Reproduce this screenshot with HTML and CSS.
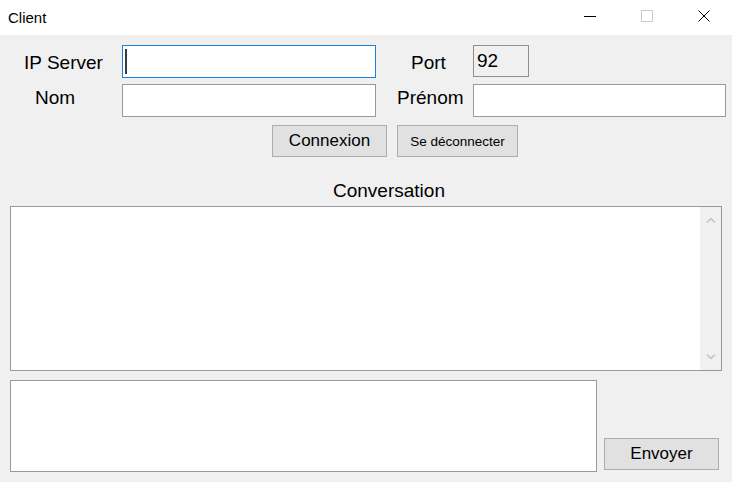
FILE: index.html
```html
<!DOCTYPE html>
<html lang="fr">
<head>
<meta charset="utf-8">
<title>Client</title>
<link rel="stylesheet" href="styles.css">
</head>
<body>
<div class="window">
  <div class="titlebar">
    <div class="title">Client</div>
    <div class="controls">
      <div class="ctl">
        <svg width="12" height="12" viewBox="0 0 12 12"><line x1="0" y1="6.5" x2="12" y2="6.5" stroke="#000" stroke-width="1"/></svg>
      </div>
      <div class="ctl">
        <svg width="12" height="12" viewBox="0 0 12 12"><rect x="0.5" y="0.5" width="11" height="11" fill="none" stroke="#cccccc" stroke-width="1"/></svg>
      </div>
      <div class="ctl">
        <svg width="12" height="12" viewBox="0 0 12 12"><path d="M0.5 0.5 L11.5 11.5 M11.5 0.5 L0.5 11.5" stroke="#000" stroke-width="1" fill="none"/></svg>
      </div>
    </div>
  </div>
  <div class="content">
    <div class="row row1">
      <div class="lbl lbl-ip">IP Server</div>
      <div class="field focused"><span class="caret"></span></div>
      <div class="lbl lbl-port">Port</div>
      <div class="field port">92</div>
    </div>
    <div class="row row2">
      <div class="lbl lbl-nom">Nom</div>
      <div class="field"></div>
      <div class="lbl lbl-prenom">Prénom</div>
      <div class="field wide"></div>
    </div>
    <div class="actions">
      <button class="btn btn-connect">Connexion</button>
      <button class="btn btn-disc">Se déconnecter</button>
    </div>
    <div class="conv-title">Conversation</div>
    <div class="conv">
      <div class="conv-body"></div>
      <div class="scrollbar">
        <svg width="10" height="6" viewBox="0 0 10 6"><path d="M1 5.5 L5 1.5 L9 5.5" stroke="#c2c2c2" stroke-width="1.4" fill="none"/></svg>
        <svg width="10" height="6" viewBox="0 0 10 6"><path d="M1 0.5 L5 4.5 L9 0.5" stroke="#c2c2c2" stroke-width="1.4" fill="none"/></svg>
      </div>
    </div>
    <div class="compose">
      <div class="msg"></div>
      <button class="btn btn-send">Envoyer</button>
    </div>
  </div>
</div>
</body>
</html>
```

FILE: styles.css
```css
* { box-sizing: border-box; }

html, body {
  margin: 0;
  padding: 0;
}

body {
  width: 732px;
  height: 482px;
  overflow: hidden;
  background: #f0f0f0;
  font-family: "Liberation Sans", Arial, sans-serif;
  color: #000;
}

.window {
  width: 732px;
  height: 482px;
  background: #f0f0f0;
}

.titlebar {
  height: 35px;
  background: #ffffff;
  display: flex;
  align-items: flex-start;
  justify-content: space-between;
}

.title {
  padding: 9px 0 0 8px;
  font-size: 15px;
  line-height: 17px;
  color: #000;
}

.controls {
  display: flex;
}

.ctl {
  width: 57px;
  height: 31px;
  display: flex;
  align-items: center;
  justify-content: center;
}

.ctl svg { display: block; }

.content {
  padding: 10px 10px 0 10px;
}

.row {
  display: flex;
  align-items: flex-start;
  height: 33px;
}

.row > * {
  flex-shrink: 0;
}

.row2 {
  margin-top: 6px;
}

.lbl {
  font-size: 19px;
  line-height: 22px;
  white-space: nowrap;
}

.row1 .lbl { padding-top: 7px; }
.row2 .lbl { padding-top: 3px; }

.lbl-ip { width: 112px; padding-left: 14px; }
.lbl-nom { width: 112px; padding-left: 25px; }
.lbl-port { width: 97px; padding-left: 35px; }
.lbl-prenom { width: 97px; padding-left: 21px; }

.field {
  width: 254px;
  height: 33px;
  background: #ffffff;
  border: 1px solid #9a9a9a;
}

.field.wide {
  width: 253px;
}

.field.focused {
  border-color: #1e7fd8;
  padding: 3px 0 0 2px;
}

.caret {
  display: block;
  width: 2px;
  height: 25px;
  background: #3a3a3a;
}

.field.port {
  width: 56px;
  height: 32px;
  background: #f0f0f0;
  border-color: #8f8f8f;
  font-size: 19px;
  line-height: 22px;
  padding: 4px 0 0 3px;
}

.actions {
  display: flex;
  gap: 10px;
  margin-top: 8px;
  padding-left: 262px;
}

.btn {
  height: 32px;
  padding: 0;
  margin: 0;
  background: #e1e1e1;
  border: 1px solid #adadad;
  border-radius: 0;
  font-family: "Liberation Sans", Arial, sans-serif;
  color: #000;
}

.btn-connect {
  width: 115px;
  font-size: 17px;
}

.btn-disc {
  width: 121px;
  font-size: 13.5px;
}

.conv-title {
  margin-top: 23px;
  padding-left: 323px;
  font-size: 19px;
  line-height: 22px;
}

.conv {
  margin-top: 4px;
  width: 712px;
  height: 165px;
  background: #ffffff;
  border: 1px solid #9a9a9a;
  display: flex;
}

.conv-body {
  flex: 1;
}

.scrollbar {
  width: 21px;
  background: #f0f0f0;
  display: flex;
  flex-direction: column;
  align-items: center;
  justify-content: space-between;
  padding: 10px 0 10px 0;
}

.scrollbar svg { display: block; }

.compose {
  display: flex;
  margin-top: 9px;
  height: 92px;
}

.msg {
  width: 587px;
  height: 92px;
  background: #ffffff;
  border: 1px solid #9a9a9a;
}

.btn-send {
  align-self: flex-end;
  margin-left: 7px;
  margin-bottom: 2px;
  width: 115px;
  font-size: 17px;
}
```
